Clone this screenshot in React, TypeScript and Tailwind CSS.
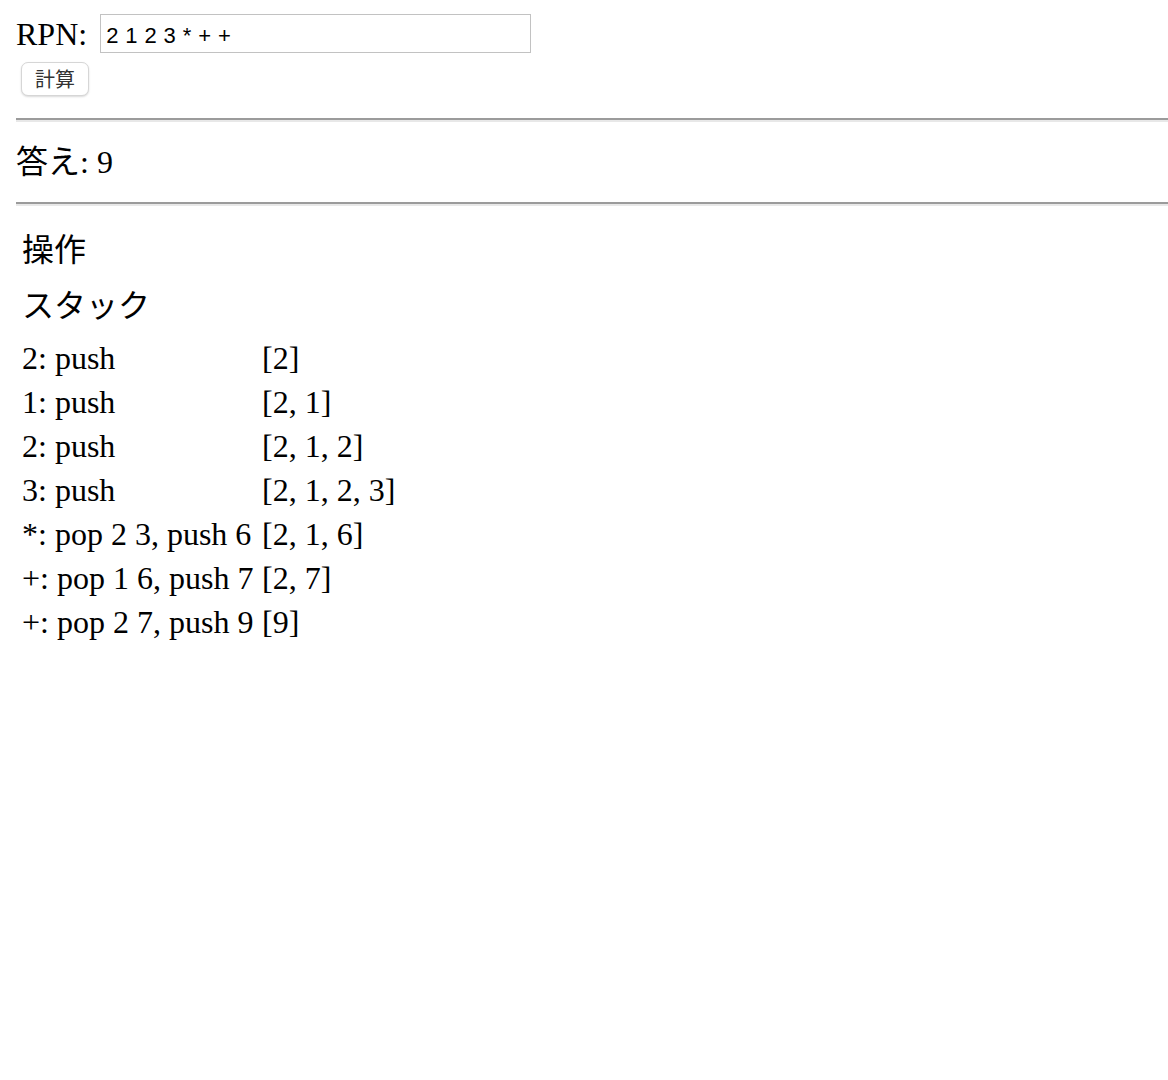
import { useState } from "react";

type Step = { op: string; stack: number[] };

// RPNを評価して各ステップを返す
const evalRpn = (src: string) => {
    const stack: number[] = [];
    const steps: Step[] = [];
    for (const tok of src.trim().split(/\s+/)) {
        if (tok === "") continue;
        if (["+", "-", "*", "/"].includes(tok)) {
            const b = stack.pop() ?? 0;
            const a = stack.pop() ?? 0;
            const r = tok === "+" ? a + b : tok === "-" ? a - b : tok === "*" ? a * b : a / b;
            stack.push(r);
            steps.push({ op: `${tok}: pop ${a} ${b}, push ${r}`, stack: [...stack] });
        } else {
            stack.push(Number(tok));
            steps.push({ op: `${tok}: push`, stack: [...stack] });
        }
    }
    return { answer: stack[stack.length - 1], steps };
};

const INITIAL = "2 1 2 3 * + +";

export default function App() {
    const [text, setText] = useState(INITIAL);
    const [result, setResult] = useState(() => evalRpn(INITIAL));

    return (
        <div className="min-h-screen bg-white pl-4 pt-[14px] text-[32px] text-black font-['Liberation_Serif','Noto_Sans_CJK_JP',serif]">
            <div className="flex items-center h-[39px]">
                <span className="leading-none">RPN:</span>
                <input
                    className="ml-[13px] h-[39px] w-[431px] border border-[#c2c2c2] pl-[5px] pt-[5px] text-[22px] tracking-[0.4px] text-black outline-none font-['Liberation_Sans',sans-serif]"
                    value={text}
                    onChange={(e) => setText(e.target.value)}
                />
            </div>
            <button
                className="mt-[9px] ml-[5px] flex h-[34px] w-[68px] items-center justify-center rounded-[7px] border border-[#d6d6d6] bg-white text-[20px] text-[#333] shadow-[0_1px_2px_rgba(0,0,0,0.15)] font-['Noto_Sans_CJK_JP',sans-serif]"
                onClick={() => setResult(evalRpn(text))}
            >
                計算
            </button>

            <hr className="mt-[22px] border-0 border-t-2 border-b-2 border-t-[#9b9b9b] border-b-[#e8e8e8]" />

            <div className="my-[16px] flex h-[48px] items-center">答え: {result.answer}</div>

            <hr className="border-0 border-t-2 border-b-2 border-t-[#9b9b9b] border-b-[#e8e8e8]" />

            <div className="mt-[16px] pl-[6px]">
                <div className="flex h-[56px] items-center">操作</div>
                <div className="flex h-[56px] items-center">スタック</div>
                <div className="mt-[2px] grid grid-cols-[240px_1fr]">
                    {result.steps.map((s, i) => (
                        <div key={i} className="contents">
                            <div className="flex h-[44px] items-center whitespace-nowrap">{s.op}</div>
                            <div className="flex h-[44px] items-center whitespace-nowrap">[{s.stack.join(", ")}]</div>
                        </div>
                    ))}
                </div>
            </div>
        </div>
    );
}
